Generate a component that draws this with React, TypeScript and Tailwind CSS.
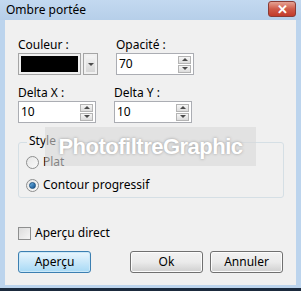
import React from "react"

const font = { fontFamily: '"Noto Sans", "Segoe UI", sans-serif' }

function SpinButtons() {
  return (
    <div className="flex flex-col gap-[1px] pr-[2px]">
      <div className="w-[13px] h-[8px] border border-[#b4b4b4] bg-gradient-to-b from-[#f6f6f6] to-[#dcdcdc] flex items-center justify-center">
        <div className="w-0 h-0 border-l-[3px] border-r-[3px] border-b-[3px] border-l-transparent border-r-transparent border-b-[#4b4b4b]" />
      </div>
      <div className="w-[13px] h-[8px] border border-[#b4b4b4] bg-gradient-to-b from-[#f6f6f6] to-[#dcdcdc] flex items-center justify-center">
        <div className="w-0 h-0 border-l-[3px] border-r-[3px] border-t-[3px] border-l-transparent border-r-transparent border-t-[#4b4b4b]" />
      </div>
    </div>
  )
}

function SpinInput({ value }: { value: string }) {
  return (
    <div className="w-[78px] h-[22px] border border-[#abadb3] bg-white flex items-center justify-between">
      <span className="pl-[2px] text-[12px] text-black">{value}</span>
      <SpinButtons />
    </div>
  )
}

function Field({ label, children }: { label: string; children: React.ReactNode }) {
  return (
    <div className="flex flex-col gap-[1px]">
      <div className="h-[14px] leading-[14px] text-[12px] text-black">{label}</div>
      {children}
    </div>
  )
}

function Radio({ checked, label }: { checked?: boolean; label: string }) {
  return (
    <div className="flex items-center gap-[4px] h-[14px]">
      <div className="w-[13px] h-[13px] rounded-full border border-[#8e8f8f] bg-gradient-to-br from-[#e6e6e6] to-[#fafafa] flex items-center justify-center">
        {checked && (
          <div className="w-[7px] h-[7px] rounded-full bg-gradient-to-br from-[#6fb7e8] to-[#0f4f8c] border border-[#1c5180]" />
        )}
      </div>
      <span className="text-[12px] text-black leading-[14px]">{label}</span>
    </div>
  )
}

function Btn({ label, focused }: { label: string; focused?: boolean }) {
  return (
    <div
      className={
        focused
          ? "w-[73px] h-[22px] rounded-[3px] border border-[#3c7fb1] bg-gradient-to-b from-[#eaf6fd] to-[#a7d9f5] flex items-center justify-center text-[12px] text-black shadow-[inset_0_0_0_1px_#cbe8f8]"
          : "w-[73px] h-[22px] rounded-[3px] border border-[#707070] bg-gradient-to-b from-[#f2f2f2] via-[#ebebeb] to-[#cfcfcf] flex items-center justify-center text-[12px] text-black shadow-[inset_0_0_0_1px_#fcfcfc]"
      }
    >
      {label}
    </div>
  )
}

export default function App() {
  return (
    <div style={font} className="relative w-[301px] h-[291px] bg-[#bcd4ed] border-b-[3px] border-[#1b2a3d] flex flex-col">
      {/* title bar */}
      <div className="h-[20px] flex items-center justify-between pl-[6px] pr-[5px] bg-gradient-to-b from-[#c3d9f0] to-[#b6cfe9]">
        <span className="text-[12px] text-black leading-[14px]">Ombre portée</span>
        <div className="w-[28px] h-[16px] -mt-[2px] rounded-[3px] border border-[#8a3b35] bg-gradient-to-b from-[#e4a294] via-[#cf5a48] to-[#c23a2a] flex items-center justify-center">
          <span className="text-white text-[13px] font-bold leading-none">✕</span>
        </div>
      </div>

      {/* client area */}
      <div className="flex-1 mx-[5px] mb-[3px] bg-[#f0f0f0] flex flex-col pl-[13px] pt-[18px]">
        <div className="flex gap-[18px]">
          <Field label="Couleur :">
            <div className="flex gap-[2px]">
              <div className="w-[63px] h-[22px] border border-[#a5a5a5] p-[2px] bg-[#f0f0f0]">
                <div className="w-full h-full bg-black" />
              </div>
              <div className="w-[15px] h-[22px] border border-[#a5a5a5] p-[2px]">
                <div className="w-full h-full bg-gradient-to-b from-[#f4f4f4] to-[#d6d6d6] flex items-center justify-center">
                  <div className="w-0 h-0 border-l-[3px] border-r-[3px] border-t-[3px] border-l-transparent border-r-transparent border-t-[#4b4b4b]" />
                </div>
              </div>
            </div>
          </Field>
          <Field label="Opacité :">
            <SpinInput value="70" />
          </Field>
        </div>

        <div className="flex gap-[18px] mt-[11px]">
          <Field label="Delta X :">
            <SpinInput value="10" />
          </Field>
          <Field label="Delta Y :">
            <SpinInput value="10" />
          </Field>
        </div>

        {/* group box */}
        <div className="relative mt-[19px] w-[266px] h-[56px] border border-[#d5dfe5] rounded-[3px] flex flex-col pl-[7px] pt-[12px] gap-[9px]">
          <span className="absolute -top-[9px] left-[8px] px-[2px] bg-[#f0f0f0] text-[12px] leading-[14px] text-black">Style</span>
          <Radio label="Plat" />
          <Radio checked label="Contour progressif" />
        </div>

        <div className="flex items-center gap-[4px] mt-[28px] h-[14px]">
          <div className="w-[13px] h-[13px] border border-[#8e8f8f] bg-gradient-to-br from-[#dcdcdc] to-[#f6f6f6]" />
          <span className="text-[12px] leading-[14px] text-black">Aperçu direct</span>
        </div>

        <div className="flex mt-[11px]">
          <Btn focused label="Aperçu" />
          <div className="ml-[39px]">
            <Btn label="Ok" />
          </div>
          <div className="ml-[7px]">
            <Btn label="Annuler" />
          </div>
        </div>
      </div>

      {/* watermark */}
      <div className="absolute left-[45px] top-[127px] w-[211px] h-[39px] bg-[#d8d8d8]/60 flex items-center justify-center">
        <span className="text-[22px] font-bold text-white tracking-[-0.5px] [text-shadow:0_0_3px_#9a9a9a]" style={{ fontFamily: '"Liberation Sans", Arial, sans-serif' }}>
          PhotofiltreGraphic
        </span>
      </div>
    </div>
  )
}
